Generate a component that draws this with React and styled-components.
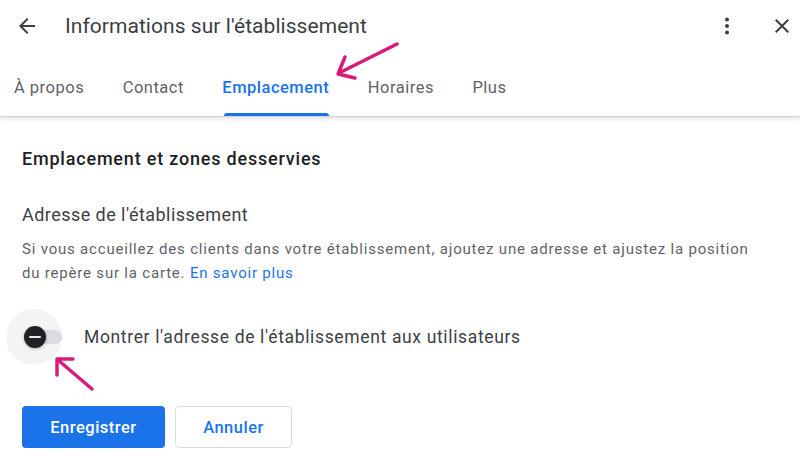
import React, {useState} from 'react'
import styled, {createGlobalStyle} from 'styled-components'

const Global = createGlobalStyle`
    body{
        margin: 0;
        font-family: Roboto, "Noto Sans", Arial, sans-serif;
        background: #fff;
    }
`

const tabs = ['À propos', 'Contact', 'Emplacement', 'Horaires', 'Plus']

export default function App() {
    const [active, setactive] = useState('Emplacement')
    const [show, setshow] = useState(false)

    return (
        <Page>
            <Global />
            <Header>
                <Topbar>
                    <IconButton aria-label="Retour">
                        <svg width="24" height="24" viewBox="0 0 24 24" fill="#3c4043">
                            <path d="M20 11H7.83l5.59-5.59L12 4l-8 8 8 8 1.41-1.41L7.83 13H20v-2z"/>
                        </svg>
                    </IconButton>
                    <Title>Informations sur l'établissement</Title>
                    <Spacer />
                    <IconButton aria-label="Plus d'options">
                        <svg width="24" height="24" viewBox="0 0 24 24" fill="#3c4043">
                            <circle cx="12" cy="5.5" r="2"/>
                            <circle cx="12" cy="12" r="2"/>
                            <circle cx="12" cy="18.5" r="2"/>
                        </svg>
                    </IconButton>
                    <IconButton aria-label="Fermer">
                        <svg width="24" height="24" viewBox="0 0 24 24" fill="#3c4043">
                            <path d="M19 6.41 17.59 5 12 10.59 6.41 5 5 6.41 10.59 12 5 17.59 6.41 19 12 13.41 17.59 19 19 17.59 13.41 12z"/>
                        </svg>
                    </IconButton>
                </Topbar>
                <Tabs>
                    {tabs.map(t => (
                        <Tab key={t} $active={t === active} onClick={() => setactive(t)}>{t}</Tab>
                    ))}
                </Tabs>
            </Header>

            <Content>
                <SectionTitle>Emplacement et zones desservies</SectionTitle>
                <Subtitle>Adresse de l'établissement</Subtitle>
                <Text>
                    Si vous accueillez des clients dans votre établissement, ajoutez une adresse et ajustez la position du repère sur la carte. <A href="#">En savoir plus</A>
                </Text>
                <ToggleRow>
                    <Halo onClick={() => setshow(!show)}>
                        <Track>
                            <Thumb $on={show}><Dash /></Thumb>
                        </Track>
                    </Halo>
                    <ToggleLabel>Montrer l'adresse de l'établissement aux utilisateurs</ToggleLabel>
                </ToggleRow>
                <Actions>
                    <Primary>Enregistrer</Primary>
                    <Secondary>Annuler</Secondary>
                </Actions>
            </Content>

            <Overlay width="800" height="472" viewBox="0 0 800 472" fill="none" stroke="#d81b7a" strokeWidth="3.5" strokeLinecap="round" strokeLinejoin="round">
                <path d="M397 44 L339 73"/>
                <path d="M345 57 L338 74 L355 78"/>
                <path d="M92 389 L58 360"/>
                <path d="M57 375 L57 359 L73 359"/>
            </Overlay>
        </Page>
    )
}

const Page = styled.div`
    position: relative;
    width: 800px;
    height: 472px;
    overflow: hidden;
    background: #fff;
`

const Header = styled.div`
    border-bottom: 1px solid #d5d5d5;
    box-shadow: 0 2px 4px rgba(60,64,67,0.15);
`

const Topbar = styled.div`
    display: flex;
    align-items: center;
    height: 52px;
    padding: 0 6px 0 15px;
`

const IconButton = styled.button`
    display: flex;
    align-items: center;
    justify-content: center;
    width: 24px;
    height: 24px;
    padding: 0;
    border: none;
    background: none;
    cursor: pointer;
    & + &{
        margin-left: 31px;
    }
`

const Title = styled.h1`
    margin: 0 0 0 26px;
    font-size: 21px;
    font-weight: 400;
    color: #3c4043;
    letter-spacing: 0.05px;
`

const Spacer = styled.div`
    flex: 1;
`

const Tabs = styled.div`
    display: flex;
    height: 64px;
    padding-left: 14px;
    gap: 38.5px;
`

const Tab = styled.div`
    position: relative;
    display: flex;
    align-items: center;
    padding-top: 6px;
    font-size: 16.5px;
    letter-spacing: 0.5px;
    font-weight: ${p => p.$active ? 500 : 400};
    color: ${p => p.$active ? '#1a73e8' : '#5f6368'};
    cursor: pointer;

    &::after{
        content: '';
        display: ${p => p.$active ? 'block' : 'none'};
        position: absolute;
        left: 2px;
        right: 0;
        bottom: 0;
        height: 3px;
        border-radius: 3px 3px 0 0;
        background: #1a73e8;
    }
`

const Content = styled.div`
    padding: 30px 22px 0;
`

const SectionTitle = styled.h2`
    margin: 0;
    font-size: 18px;
    font-weight: 500;
    letter-spacing: 0.8px;
    color: #202124;
    line-height: 24px;
`

const Subtitle = styled.h3`
    margin: 32px 0 0;
    font-size: 18px;
    font-weight: 400;
    letter-spacing: 0.45px;
    color: #3c4043;
    line-height: 24px;
`

const Text = styled.p`
    margin: 10px 0 0;
    font-size: 15px;
    letter-spacing: 0.8px;
    line-height: 24px;
    color: #5f6368;
    width: 740px;
`

const A = styled.a`
    color: #1a73e8;
    text-decoration: none;
`

const ToggleRow = styled.div`
    display: flex;
    align-items: center;
    margin: 24px 0 0 -16px;
`

const Halo = styled.div`
    display: flex;
    align-items: center;
    justify-content: center;
    width: 56px;
    height: 56px;
    border-radius: 50%;
    background: #f3f4f4;
    cursor: pointer;
`

const Track = styled.div`
    position: relative;
    width: 34px;
    height: 14px;
    margin-left: 30px;
    border-radius: 7px;
    background: #dadce0;
`

const Thumb = styled.div`
    position: absolute;
    top: -4px;
    left: ${p => p.$on ? '12px' : '-12px'};
    width: 22px;
    height: 22px;
    border-radius: 50%;
    background: #202124;
    box-shadow: 0 1px 3px rgba(0,0,0,0.3);
    display: flex;
    align-items: center;
    justify-content: center;
`

const Dash = styled.div`
    width: 12px;
    height: 2px;
    background: #e8eaed;
    border-radius: 1px;
`

const ToggleLabel = styled.span`
    margin-left: 22px;
    font-size: 17.5px;
    letter-spacing: 0.65px;
    color: #3c4043;
`

const Actions = styled.div`
    display: flex;
    gap: 10px;
    margin-top: 41px;
`

const Primary = styled.button`
    width: 143px;
    height: 42px;
    border: none;
    border-radius: 4px;
    background: #1a73e8;
    color: #fff;
    font-family: inherit;
    font-size: 16.5px;
    letter-spacing: 0.5px;
    font-weight: 500;
    cursor: pointer;
`

const Secondary = styled.button`
    width: 117px;
    height: 42px;
    border: 1px solid #dadce0;
    border-radius: 4px;
    background: #fff;
    color: #1a73e8;
    font-family: inherit;
    font-size: 16.5px;
    letter-spacing: 0.5px;
    font-weight: 500;
    cursor: pointer;
`

const Overlay = styled.svg`
    position: absolute;
    top: 0;
    left: 0;
    pointer-events: none;
`
